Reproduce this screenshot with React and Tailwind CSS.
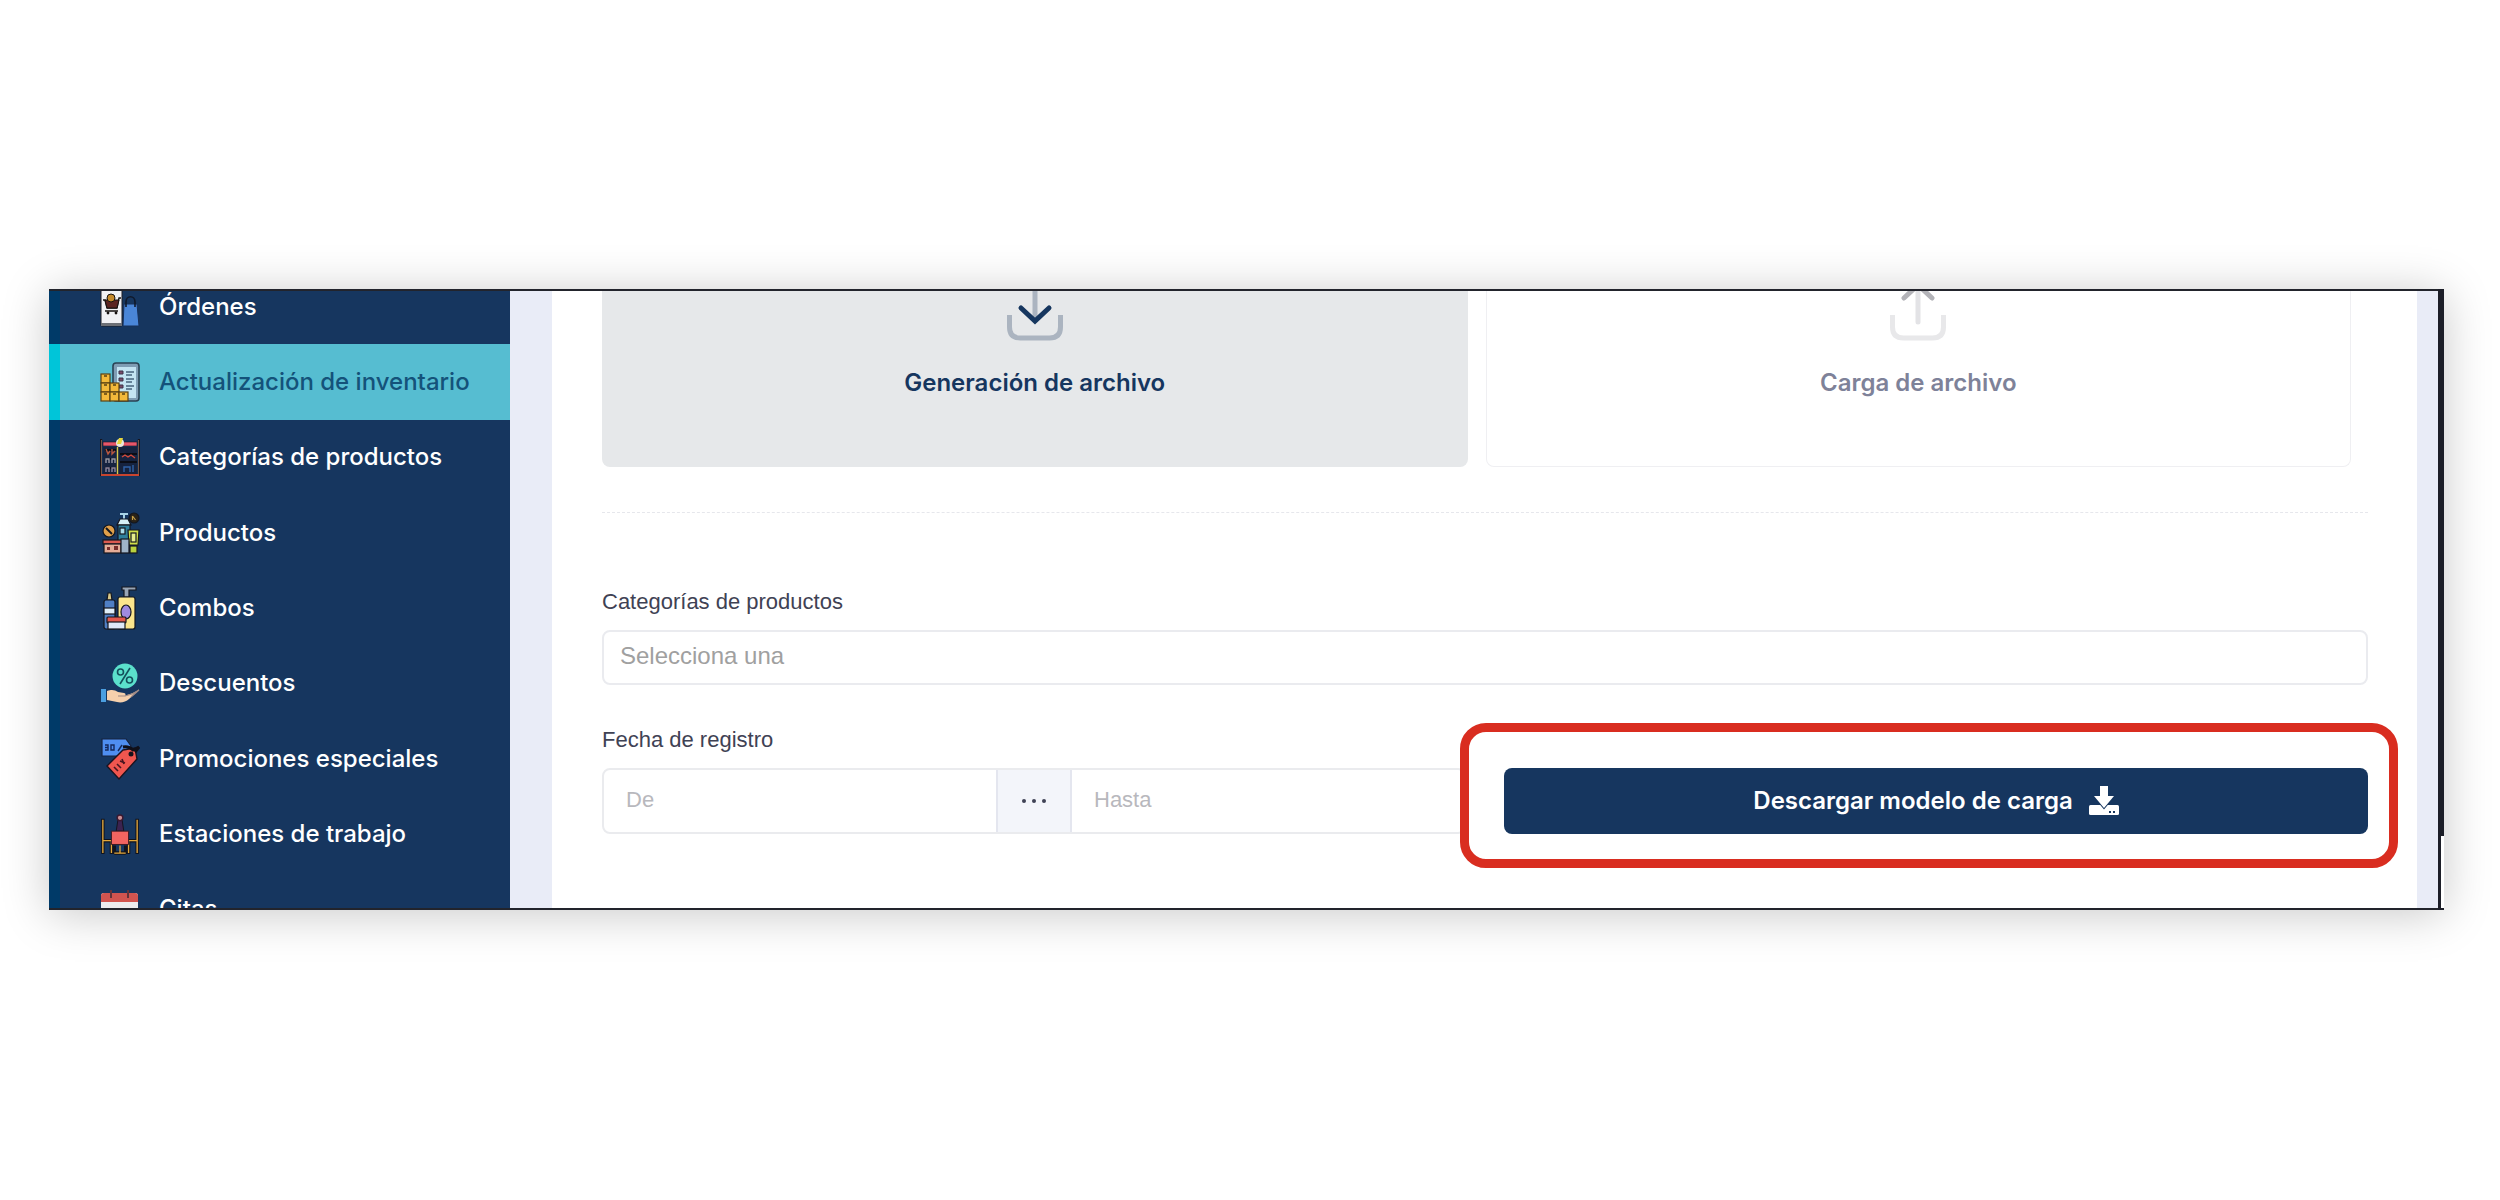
import React, { useState } from "react";

const OrdersIcon = () => (
  <svg viewBox="0 0 40 44" className="w-10 h-11">
    <rect x="1" y="1" width="21" height="40" rx="1" fill="#f1f1f4" stroke="#1c1c24" />
    <path d="M1 38h21v3H1z" fill="#6d7076" />
    <path d="M3 15h2l2 8h10l2-10h2" fill="none" stroke="#16110f" strokeWidth="1.4" />
    <path d="M5 15h14l-2 8H7z" fill="#5b2320" stroke="#16110f" />
    <path d="M5 26h13" stroke="#16110f" strokeWidth="1.5" />
    <circle cx="8" cy="28" r="1.4" fill="#16110f" />
    <circle cx="16" cy="28" r="1.4" fill="#16110f" />
    <circle cx="11" cy="13" r="4" fill="#c58a2b" stroke="#16110f" />
    <path d="M24 19h13l2 22H23z" fill="#4a86d8" stroke="#17305a" />
    <path d="M26 22v-5c0-7 9-7 9 0v5" fill="none" stroke="#10192b" strokeWidth="1.6" />
  </svg>
);

const InventoryIcon = () => (
  <svg viewBox="0 0 40 40" className="size-10">
    <rect x="13" y="1" width="26" height="38" rx="3" fill="#7f9db4" stroke="#2a4254" strokeWidth="1.6" />
    <rect x="17" y="5" width="19" height="31" fill="#c4e4f2" />
    <path d="M19 9h4v3h-4zM19 16h4v3h-4zM19 23h4v3h-4z" fill="#7a4a68" stroke="#3d3348" />
    <path d="M26 10h8M26 13h6M26 17h8M26 20h6M26 24h8M26 27h6" stroke="#47637c" strokeWidth="1.4" />
    <g fill="#f3b93a" stroke="#5a4213" strokeWidth="1.2">
      <rect x="1" y="12" width="9" height="9" />
      <rect x="1" y="21" width="9" height="9" />
      <rect x="10" y="21" width="9" height="9" />
      <rect x="1" y="30" width="9" height="9" />
      <rect x="10" y="30" width="9" height="9" />
      <rect x="19" y="30" width="9" height="9" />
    </g>
    <path d="M4 14h3M4 23h3M13 23h3M4 32h3M13 32h3M22 32h3" stroke="#5a4213" strokeWidth="1.6" />
  </svg>
);

const CategoriesIcon = () => (
  <svg viewBox="0 0 40 40" className="size-10">
    <path d="M1 2v37M39 2v37" stroke="#17141f" strokeWidth="2.4" />
    <path d="M1.5 3v36M38.5 3v36" stroke="#8c6a54" strokeWidth="0.8" />
    <rect x="3" y="10" width="34" height="27" fill="#16233f" />
    <rect x="3" y="5" width="34" height="4" fill="#e8566a" stroke="#17141f" strokeWidth="0.6" />
    <circle cx="20" cy="6" r="4" fill="#e9e6dc" />
    <path d="M19 1h4l-2 6h-4z" fill="#e6d63b" />
    <path d="M17.5 10v27" stroke="#d7c84a" strokeWidth="1.4" />
    <path d="M5 13h11M5 22h11M5 31h11M20 17h17M20 25h17" stroke="#0b0d16" strokeWidth="2" />
    <g fill="none" strokeWidth="1.4">
      <path d="M6 12l2 5 2-3M12 12v5l3-3" stroke="#b8573f" />
      <path d="M6 26v-4h3v4M12 26v-4h3v4" stroke="#9a9aa8" />
      <path d="M6 35v-4h3v4M12 35v-4h3v4" stroke="#8f86a0" />
      <path d="M22 20l3-2 3 2 3-2 4 3" stroke="#d3493b" />
      <path d="M24 35v-5h6v5M33 35v-7" stroke="#2f62a8" />
    </g>
    <path d="M1 38h38" stroke="#c8442f" strokeWidth="2" />
  </svg>
);

const ProductsIcon = () => (
  <svg viewBox="0 0 40 44" className="w-10 h-11">
    <g stroke="#14171f" strokeWidth="1.2">
      <path d="M20 3h8M24 3v6" stroke="#a9d4e6" strokeWidth="2" />
      <path d="M20 8h8l3 6H17z" fill="#d5f0f7" />
      <rect x="18" y="14" width="12" height="17" fill="#2f7f9c" />
      <rect x="20" y="17" width="5" height="6" fill="#a9dcea" />
      <circle cx="34" cy="7" r="5" fill="#2a2318" />
      <circle cx="9" cy="20" r="6" fill="#e0a04a" />
      <path d="M6 17l6 6" strokeWidth="2" />
      <path d="M28 19h11l-1 15h-9z" fill="#cfdf4a" />
      <rect x="31" y="22" width="5" height="9" fill="#e6ee8c" />
      <rect x="30" y="35" width="7" height="7" fill="#b9d23e" />
      <rect x="3" y="29" width="19" height="4" fill="#dc5a50" />
      <rect x="4" y="33" width="17" height="9" fill="#e5ac97" />
      <rect x="21" y="28" width="8" height="14" fill="#9fb4c8" />
    </g>
    <path d="M32.5 5l3 4M32.5 9V5" stroke="#c7a046" strokeWidth="1.2" />
    <path d="M7 36h3v3H7zM14 35h4v4h-4z" fill="#7a2e2b" />
  </svg>
);

const CombosIcon = () => (
  <svg viewBox="0 0 40 44" className="w-10 h-11">
    <g stroke="#14171f" strokeWidth="1.2">
      <path d="M8 7h3l1 7H7z" fill="#d8c98a" />
      <rect x="4" y="14" width="11" height="29" rx="2" fill="#4f7fc4" />
      <rect x="4" y="22" width="11" height="6" fill="#dfeef8" />
      <path d="M22 1h14v3h-7v7h-5V4h-2z" fill="#98a5b5" />
      <rect x="18" y="11" width="17" height="32" rx="2" fill="#fbe58c" />
      <ellipse cx="26" cy="26" rx="5" ry="7" fill="#9f8ae0" />
      <rect x="7" y="31" width="19" height="6" rx="1" fill="#e2574d" />
      <rect x="8" y="36" width="17" height="7" fill="#dfe8f8" />
    </g>
  </svg>
);

const DiscountIcon = () => (
  <svg viewBox="0 0 40 40" className="size-10">
    <circle cx="25" cy="13" r="12.5" fill="#5be0cc" />
    <g fill="none" stroke="#14505c" strokeWidth="1.6">
      <circle cx="20.5" cy="9" r="3" />
      <circle cx="29.5" cy="17" r="3" />
      <path d="M30 5L20 21" />
    </g>
    <path d="M1 26h5v13H1z" fill="#4b9fe0" />
    <path d="M7 28c5-2 8-1 11 1l6 1c2 0 2 3 0 3l9-3 6-3-10 9c-3 3-8 4-12 3l-10-2z" fill="#f6d0ac" />
    <path d="M18 33h7l7-2 7-4-8 7" fill="none" stroke="#9e8a86" strokeWidth="1.2" />
  </svg>
);

const PromoIcon = () => (
  <svg viewBox="0 0 40 44" className="w-10 h-11">
    <path d="M2 2h24l5 7-5 10H2z" fill="#4f8ef0" stroke="#16233f" strokeWidth="1.2" />
    <path d="M5 8h3v5H5M5 10.5h3M11 8h3v5h-3zM22 8l-4 6" fill="none" stroke="#14295c" strokeWidth="1.4" />
    <path d="M23 13l12-2 2 11-18 20L7 29z" fill="#f0564f" stroke="#1b1420" strokeWidth="1.4" />
    <path d="M14 30l4 4M17 27l4 4M20 24l5 2M22 22l2 5" stroke="#4a1520" strokeWidth="1.6" />
    <circle cx="31" cy="17" r="2.5" fill="#16121c" />
    <path d="M23 10c5-1 8 1 10 3l6-3-4 5" fill="none" stroke="#0f0f18" strokeWidth="3" />
  </svg>
);

const StationsIcon = () => (
  <svg viewBox="0 0 42 44" className="w-10 h-11">
    <g fill="none" stroke="#11131c" strokeWidth="3.6">
      <path d="M3 6v37M39 6v37M3 29h9v14M39 29h-9v14M15 34v9M27 34v9M15 42h12" />
    </g>
    <g fill="none" stroke="#e3a83c" strokeWidth="1.4">
      <path d="M3 7v35M39 7v35M3 29h9v13M39 29h-9v13M21 34v8M15 42h12" />
    </g>
    <path d="M19 6h4l2 13h-8z" fill="#3b2350" stroke="#14121c" />
    <circle cx="21" cy="5" r="3" fill="#c98d92" stroke="#3a1830" strokeWidth="1.5" />
    <path d="M12 19h18v14H12z" fill="#f26460" stroke="#3a1820" />
  </svg>
);

const CalendarIcon = () => (
  <svg viewBox="0 0 40 40" className="size-10">
    <rect x="1" y="4" width="37" height="36" rx="3" fill="#ececef" />
    <path d="M1 13V7a3 3 0 0 1 3-3h31a3 3 0 0 1 3 3v6z" fill="#d1544f" />
    <path d="M11 1v8M28 1v8" stroke="#63333a" strokeWidth="2" />
    <path d="M14 20h4v4h-4zM21 20h4v4h-4z" fill="none" stroke="#76767e" strokeWidth="1.2" />
  </svg>
);

const menuItems = [
  { name: "Órdenes", Icon: OrdersIcon },
  { name: "Actualización de inventario", Icon: InventoryIcon },
  { name: "Categorías de productos", Icon: CategoriesIcon },
  { name: "Productos", Icon: ProductsIcon },
  { name: "Combos", Icon: CombosIcon },
  { name: "Descuentos", Icon: DiscountIcon },
  { name: "Promociones especiales", Icon: PromoIcon },
  { name: "Estaciones de trabajo", Icon: StationsIcon },
  { name: "Citas", Icon: CalendarIcon },
];

const Sidebar = () => (
  <nav className="w-[461px] shrink-0 -mt-5 h-[678px] grid auto-rows-fr bg-[#16365f]">
    {menuItems.map(({ name, Icon }) => {
      const active = name === "Actualización de inventario";
      return (
        <a
          key={name}
          href="#"
          className={`flex items-center gap-[19px] pl-10 border-l-[11px] text-2xl whitespace-nowrap font-medium ${
            active
              ? "border-[#00c5d9] bg-[#56bdd1] text-[#14527a]"
              : "border-[#003a68] text-white"
          }`}
        >
          <Icon />
          {name}
        </a>
      );
    })}
  </nav>
);

const GenerateIcon = () => (
  <svg viewBox="0 0 72 72" className="size-[72px] shrink-0" fill="none" strokeLinecap="round" strokeWidth="5">
    <path d="M36 6v32" stroke="#abb4c0" />
    <path d="M10.5 36v12q0 11 11 11h29q11 0 11-11V36" stroke="#abb4c0" strokeLinecap="butt" />
    <path d="M22 29l14 13 14-13" stroke="#16365f" />
  </svg>
);

const UploadIcon = () => (
  <svg viewBox="0 0 72 72" className="size-[72px] shrink-0" fill="none" strokeLinecap="round" strokeWidth="5">
    <path d="M36 12v31" stroke="#e3e3e6" />
    <path d="M10.5 36v12q0 11 11 11h29q11 0 11-11V36" stroke="#e8e8ea" strokeLinecap="butt" />
    <path d="M22 19L36 6l14 13" stroke="#b3b3b8" />
  </svg>
);

const DownloadIcon = () => (
  <svg viewBox="0 0 30 30" className="size-[30px]" fill="currentColor">
    <rect y="19" width="30" height="10" rx="1.5" />
    <path d="M11 0h8v10h6L15 22 5 10h6z" stroke="#16365f" strokeWidth="2" paintOrder="stroke" />
    <path d="M20 25h2v2h-2zM24 25h2v2h-2z" fill="#16365f" />
  </svg>
);

const InventoryForm = () => {
  const [category, setCategory] = useState("");
  const [from, setFrom] = useState("");
  const [to, setTo] = useState("");

  return (
    <main className="flex-1 min-w-0 bg-white pl-[50px] pr-[49px]">
      <div className="grid grid-cols-2 gap-[18px] pr-[17px] text-2xl">
        <button className="h-[178px] rounded-b-lg bg-[#e6e8ea] text-[#16365f] font-semibold flex flex-col items-center justify-end pb-[68px] gap-4">
          <GenerateIcon />
          <span>Generación de archivo</span>
        </button>
        <button className="h-[178px] rounded-b-lg border border-t-0 border-[#efeff2] text-[#7e8299] font-semibold flex flex-col items-center justify-end pb-[67px] gap-4">
          <UploadIcon />
          <span>Carga de archivo</span>
        </button>
      </div>

      <hr className="mt-[45px] border-t border-dashed border-[#e6e7ec]" />

      <form
        className="mt-[73px] font-['Liberation_Sans',sans-serif] text-[22px] text-[#3f4254]"
        onSubmit={(e) => e.preventDefault()}
      >
        <label htmlFor="category" className="block leading-8">
          Categorías de productos
        </label>
        <input
          id="category"
          placeholder="Selecciona una"
          value={category}
          onChange={(e) => setCategory(e.target.value)}
          className="mt-3 w-full h-[55px] px-4 pb-1 border-2 border-[#eaebef] rounded-lg text-2xl placeholder-[#a0a0a0] focus:outline-none"
        />
        <div className="mt-[39px] grid grid-cols-2 gap-[38px]">
          <div>
            <label htmlFor="from" className="block leading-8">
              Fecha de registro
            </label>
            <div className="mt-3 flex h-[66px] border-2 border-[#eaebee] rounded-lg overflow-hidden">
              <input
                id="from"
                placeholder="De"
                value={from}
                onChange={(e) => setFrom(e.target.value)}
                className="flex-1 min-w-0 px-[22px] pb-1 placeholder-[#b8b8bd] focus:outline-none"
              />
              <span className="w-[76px] border-x-2 border-[#e4e6ef] bg-[#f3f5fa] flex items-center justify-center gap-[6px]">
                <i className="size-1 rounded-full bg-[#3f4254]" />
                <i className="size-1 rounded-full bg-[#3f4254]" />
                <i className="size-1 rounded-full bg-[#3f4254]" />
              </span>
              <input
                aria-label="Hasta"
                placeholder="Hasta"
                value={to}
                onChange={(e) => setTo(e.target.value)}
                className="flex-1 min-w-0 px-[22px] pb-1 placeholder-[#b8b8bd] focus:outline-none"
              />
            </div>
          </div>
          <div className="relative flex items-end">
            <button className="w-full h-[66px] rounded-lg bg-[#16365f] text-white font-['Inter',sans-serif] text-2xl font-semibold flex items-center justify-center gap-4">
              Descargar modelo de carga
              <DownloadIcon />
            </button>
            {/* highlight around the download action */}
            <div className="absolute -left-[44px] -right-[30px] -top-px -bottom-[34px] border-[9px] border-[#d92d20] rounded-[26px] pointer-events-none" />
          </div>
        </div>
      </form>
    </main>
  );
};

export default function App() {
  return (
    <div className="min-h-screen bg-white px-[49px] py-[289px] pr-[56px] font-['Inter',sans-serif]">
      <div className="relative h-[621px] overflow-hidden flex bg-[#e9ecf7] pr-[27px] shadow-[0_4px_44px_rgba(0,0,0,0.22)]">
        <Sidebar />
        <div className="w-[42px] shrink-0" />
        <InventoryForm />
        <div className="absolute inset-0 border-y-2 border-[#22242c] pointer-events-none" />
        <div className="absolute right-0 top-0 h-[547px] w-[6px] bg-[#1c1e28]" />
        <div className="absolute right-0 bottom-0 h-[74px] w-[6px] border-l-3 border-b-2 border-[#1c1e28] bg-white" />
      </div>
    </div>
  );
}
